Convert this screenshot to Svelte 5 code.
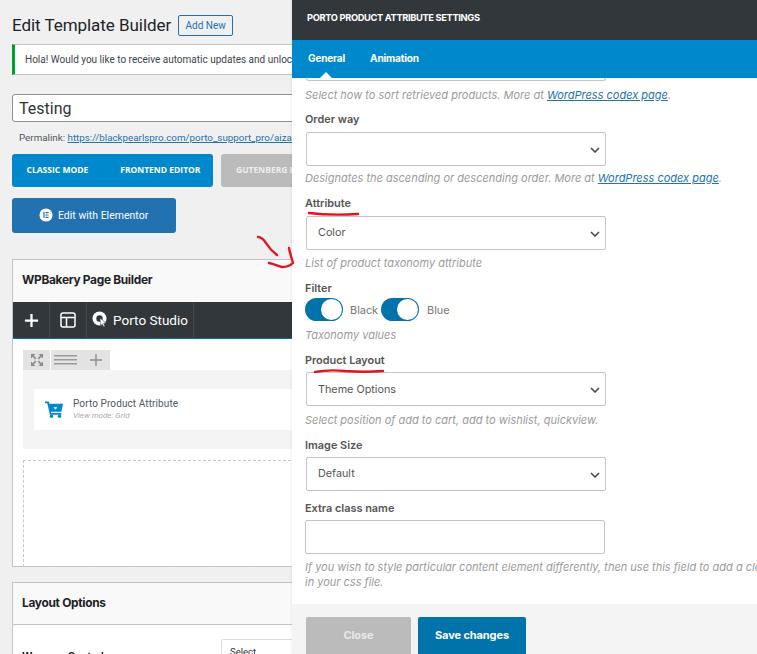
<script>
  const tabs = ['General', 'Animation'];
</script>

<div class="stage">
  <main class="page">
    <div class="title-row">
      <h1>Edit Template Builder</h1>
      <span class="add-new">Add New</span>
    </div>
    <div class="notice">Hola! Would you like to receive automatic updates and unlock</div>
    <div class="title-input">Testing</div>
    <div class="permalink">Permalink: <a href="#p">https://blackpearlspro.com/porto_support_pro/aizaz</a></div>
    <div class="modes">
      <div class="mode-blue"><span>CLASSIC MODE</span><span>FRONTEND EDITOR</span></div>
      <div class="mode-gray">GUTENBERG EDITOR</div>
    </div>
    <div class="elementor">
      <svg width="16" height="16" viewBox="0 0 16 16"><circle cx="8" cy="8" r="7.5" fill="#fff"/><path d="M5 4.600h1.400v6.800H5zM7.400 4.600H11V6H7.400zM7.400 7.300H11v1.400H7.400zM7.400 10H11v1.400H7.400z" fill="#2271b1"/></svg>
      <span>Edit with Elementor</span>
    </div>

    <section class="card builder">
      <header class="card-head">WPBakery Page Builder</header>
      <div class="toolbar">
        <div class="tool tool-plus">
          <svg width="15" height="15" viewBox="0 0 16 16"><path d="M8 1v14M1 8h14" stroke="#fff" stroke-width="2.400"/></svg>
        </div>
        <div class="tool tool-layout">
          <svg width="16" height="16" viewBox="0 0 16 16" fill="none" stroke="#fff" stroke-width="1.500"><rect x="1" y="1" width="14" height="14" rx="2"/><path d="M1 5.500h14M6.500 5.500V15"/></svg>
        </div>
        <div class="tool tool-studio">
          <svg width="16" height="18" viewBox="0 0 16 18"><circle cx="7.500" cy="7.500" r="7" fill="#fff"/><circle cx="7.500" cy="7.500" r="3.200" fill="#32373c"/><path d="M8 7l6 5-2.500.3 1.500 3-1.300.6-1.500-3L8.500 14z" fill="#fff" stroke="#32373c" stroke-width=".5"/></svg>
          <span>Porto Studio</span>
        </div>
      </div>
      <div class="canvas">
        <div class="row-controls">
          <div class="ctl ctl-move">
            <svg width="12" height="12" viewBox="0 0 12 12"><path d="M0 0h4.500L0 4.500zM12 0v4.500L7.500 0zM0 12V7.500L4.500 12zM12 12H7.500L12 7.500z" fill="#8a8a8a"/><path d="M2 2l2.800 2.800M10 2L7.200 4.800M2 10l2.800-2.800M10 10L7.200 7.200" stroke="#8a8a8a" stroke-width="1.700"/></svg>
          </div>
          <div class="ctl ctl-rest">
            <svg width="23" height="10" viewBox="0 0 23 10" fill="#9a9a9a"><rect y="0" width="23" height="1.500"/><rect y="4" width="23" height="1.500"/><rect y="8" width="23" height="1.500"/></svg>
            <svg width="12" height="12" viewBox="0 0 12 12"><path d="M6 0v12M0 6h12" stroke="#8a8a8a" stroke-width="1.300"/></svg>
          </div>
        </div>
        <div class="row-box">
          <div class="element">
            <svg width="18" height="17" viewBox="0 0 18 17"><path d="M0 .5h3.800l.7 2.200H18l-1.600 8H5.900l.4 1.300h10v1.700H4.900L2.300 2.300H0z" fill="#0088cc"/><circle cx="6.500" cy="15.300" r="1.700" fill="#0088cc"/><circle cx="14.500" cy="15.300" r="1.700" fill="#0088cc"/><path d="M10.300 4v2.200h2L10.500 8.700 8.500 6.200h1.800V4z" fill="#fff"/></svg>
            <div class="element-text">
              <div class="element-name">Porto Product Attribute</div>
              <div class="element-mode">View mode: Grid</div>
            </div>
          </div>
        </div>
        <div class="dropzone"></div>
      </div>
    </section>

    <section class="card layout-card">
      <header class="card-head layout-head">Layout Options</header>
      <div class="layout-body">
        <span class="layout-label">Woocom Control</span>
        <span class="layout-select">Select</span>
      </div>
    </section>
  </main>

  <aside class="panel">
    <div class="panel-title">PORTO PRODUCT ATTRIBUTE SETTINGS</div>
    <nav class="panel-tabs">
      {#each tabs as t, i}
        <span class="tab" class:active={i === 0}>{t}</span>
      {/each}
    </nav>
    <div class="panel-body">
      <div class="clipped-select"></div>
      <p class="help h-first">Select how to sort retrieved products. More at <a href="#w">WordPress codex page</a>.</p>

      <div class="label l-near">Order way</div>
      <div class="select"><svg class="chev" width="10" height="6" viewBox="0 0 10 6"><path d="M1 1l4 4 4-4" fill="none" stroke="#444" stroke-width="1.500"/></svg></div>
      <p class="help h-high">Designates the ascending or descending order. More at <a href="#w">WordPress codex page</a>.</p>

      <div class="label">Attribute</div>
      <div class="select"><span>Color</span><svg class="chev" width="10" height="6" viewBox="0 0 10 6"><path d="M1 1l4 4 4-4" fill="none" stroke="#444" stroke-width="1.500"/></svg></div>
      <p class="help">List of product taxonomy attribute</p>

      <div class="label">Filter</div>
      <div class="toggles">
        <span class="toggle"><i></i></span><span class="tlabel">Black</span>
        <span class="toggle"><i></i></span><span class="tlabel">Blue</span>
      </div>
      <p class="help h-low">Taxonomy values</p>

      <div class="label">Product Layout</div>
      <div class="select s-tight"><span>Theme Options</span><svg class="chev" width="10" height="6" viewBox="0 0 10 6"><path d="M1 1l4 4 4-4" fill="none" stroke="#444" stroke-width="1.500"/></svg></div>
      <p class="help h-low">Select position of add to cart, add to wishlist, quickview.</p>

      <div class="label">Image Size</div>
      <div class="select s-tight s-lift"><span>Default</span><svg class="chev" width="10" height="6" viewBox="0 0 10 6"><path d="M1 1l4 4 4-4" fill="none" stroke="#444" stroke-width="1.500"/></svg></div>

      <div class="label l-near">Extra class name</div>
      <div class="text-input"></div>
      <p class="help h-extra">If you wish to style particular content element differently, then use this field to add a class name and then refer to it<br/>in your css file.</p>
    </div>
    <footer class="panel-foot">
      <span class="btn btn-close">Close</span>
      <span class="btn btn-save">Save changes</span>
    </footer>
  </aside>

  <svg class="ink" width="757" height="654" viewBox="0 0 757 654" fill="none" stroke="#e0161c" stroke-linecap="round" stroke-width="2.400">
    <path d="M258 237c4 0 6 3 8 6 3 5 7 9 11 12"/>
    <path d="M289 248c1 6 3 11 4 15-3 3-7 4-11 4-4-1-8-3-13-4"/>
    <path d="M309 213c16 2 33 2 49 1"/>
    <path d="M315 372c10-2 20-2 30-1 13 1 26 1 38 0"/>
  </svg>
</div>

<style>
  :global(body) { margin: 0; background: #f0f0f1; }
  .stage { position: relative; width: 757px; height: 654px; overflow: hidden; font-family: Roboto, "Open Sans", sans-serif; color: #3c434a; }

  .page { width: 757px; box-sizing: border-box; padding: 15px 0 0 12px; }
  .title-row { display: flex; align-items: center; gap: 7px; height: 21px; }
  h1 { margin: 0; font-size: 17px; font-weight: 400; color: #1d2327; line-height: 21px; white-space: nowrap; letter-spacing: -.05px; }
  .add-new { box-sizing: border-box; width: 55px; height: 21px; border: 1px solid #2271b1; border-radius: 2px; color: #2271b1; font-size: 10px; line-height: 19px; text-align: center; }
  .notice { box-sizing: border-box; margin-top: 8px; height: 31px; width: 745px; background: #fff; border: 1px solid #c3c4c7; border-left: 3px solid #00a32a; padding-left: 10px; font-size: 10px; line-height: 30px; white-space: nowrap; overflow: hidden; }
  .title-input { box-sizing: border-box; margin-top: 19px; height: 28px; width: 745px; background: #fff; border: 1px solid #8c8f94; border-radius: 3px; padding: 1px 0 0 6px; font-size: 16px; line-height: 26px; color: #2c3338; }
  .permalink { margin: 9px 0 0 7px; font-size: 9.800px; line-height: 14px; color: #50575e; white-space: nowrap; }
  .permalink a { color: #2271b1; }

  .modes { display: flex; gap: 8px; margin-top: 9px; height: 33px; font-family: "Open Sans", sans-serif; font-size: 8.500px; font-weight: 700; color: #fff; line-height: 32px; }
  .mode-blue { box-sizing: border-box; width: 201px; background: #0088cc; border-radius: 3px; display: flex; gap: 32px; padding-left: 14.500px; }
  .mode-gray { width: 200px; background: #bbb; border-radius: 3px 0 0 3px; padding-left: 15px; white-space: nowrap; color: #eee; }

  .elementor { box-sizing: border-box; margin-top: 11px; width: 164px; height: 35px; background: #2271b1; border-radius: 3px; color: #fff; font-size: 10.500px; display: flex; align-items: center; gap: 5px; padding-left: 27px; padding-bottom: 1px; }
  .elementor svg { width: 14px; height: 14px; }

  .card { box-sizing: border-box; width: 745px; background: #fff; border: 1px solid #c3c4c7; }
  .builder { margin-top: 26px; height: 308px; }
  .card-head { height: 42px; box-sizing: border-box; padding-left: 9px; background: #f9f9f9; font-family: Inter, sans-serif; font-size: 11.900px; font-weight: 700; letter-spacing: -.3px; line-height: 40px; color: #1d2327; }
  .toolbar { height: 37px; background: #32373c; border-bottom: 1px solid #0073aa; box-sizing: border-box; display: flex; color: #fff; }
  .tool { display: flex; align-items: center; justify-content: center; border-right: 1px solid #454a4f; }
  .tool-plus { width: 36px; }
  .tool-layout { width: 36px; }
  .tool-studio { width: 106px; gap: 5px; font-size: 13.500px; }

  .canvas { padding: 11px 10px 0; }
  .row-controls { display: flex; height: 20px; gap: 1px; }
  .ctl { background: #e3e3e3; display: flex; align-items: center; justify-content: center; }
  .ctl-move { width: 27px; }
  .ctl-rest { width: 59px; gap: 13px; justify-content: flex-start; padding-left: 3px; box-sizing: border-box; }
  .row-box { background: #f4f4f4; height: 79px; padding: 19px 11px 0; box-sizing: border-box; }
  .element { background: #fff; height: 41px; display: flex; align-items: center; padding-left: 11px; gap: 10px; }
  .element-name { font-size: 10px; line-height: 13px; color: #50575e; letter-spacing: .1px; margin-top: -2px; }
  .element-mode { font-size: 8px; line-height: 11px; color: #aaa; font-style: italic; }
  .dropzone { box-sizing: border-box; margin-top: 11px; height: 107px; border: 1px dashed #c8c8c8; }

  .layout-card { margin-top: 15px; height: 120px; }
  .layout-head { border-bottom: 1px solid #c3c4c7; line-height: 40px; }
  .layout-body { display: flex; padding: 14px 0 0 9px; position: relative; font-size: 10px; }
  .layout-label { width: 199px; margin-top: 11px; font-weight: 700; color: #1d2327; font-family: Inter, sans-serif; }
  .layout-select { box-sizing: border-box; width: 300px; height: 30px; border: 1px solid #ddd; border-radius: 2px; padding: 6px 8px; color: #333; font-size: 9.500px; }

  .panel { position: absolute; left: 292px; top: 0; width: 465px; height: 654px; background: #fff; display: flex; flex-direction: column; box-shadow: -1px 0 2px rgba(0,0,0,.05); font-family: Inter, sans-serif; }
  .panel-title { flex: none; height: 40px; background: #32373c; color: #fff; font-size: 9.300px; font-weight: 700; line-height: 36px; padding-left: 15px; letter-spacing: -.35px; white-space: nowrap; }
  .panel-tabs { flex: none; height: 38px; background: #0088cc; display: flex; gap: 25px; padding-left: 16px; color: #fff; font-size: 10.100px; font-weight: 700; line-height: 37px; letter-spacing: -.2px; }
  .tab { position: relative; }
  .tab.active::after { content: ""; position: absolute; left: 12px; bottom: 0; border: 6px solid transparent; border-top: 0; border-bottom-color: #fff; }

  .panel-body { flex: 1; min-height: 0; overflow: hidden; padding: 0 0 0 13px; color: #666; position: relative; }
  .clipped-select { box-sizing: border-box; width: 300px; height: 3px; margin: 0 0 0 1px; border: 1px solid #c3c4c7; border-top: 0; border-radius: 0 0 3px 3px; }
  .help { margin: 6px 0 0; font-size: 11px; line-height: 14px; font-style: italic; color: #9b9b9b; white-space: nowrap; }
  .h-first { margin-top: 7px; }
  .h-low { margin-top: 7px; }
  .h-high { margin-top: 5px; }
  .help a { color: #2271b1; }
  .label { margin-top: 11px; font-size: 10.900px; font-weight: 600; color: #555; line-height: 14px; }
  .l-near { margin-top: 10px; }
  .select { box-sizing: border-box; width: 300px; height: 34px; margin: 6px 0 0 1px; border: 1px solid #c3c4c7; border-radius: 2px; display: flex; align-items: center; padding: 0 0 2px 11px; font-size: 10.800px; color: #555; position: relative; }
  .s-tight { margin-top: 5px; padding-bottom: 0; }
  .s-lift { padding-bottom: 2px; }
  .chev { position: absolute; right: 5px; top: 14px; }
  .toggles { display: flex; align-items: center; height: 23px; margin-top: 3px; font-size: 10.900px; color: #777; }
  .toggle { box-sizing: border-box; width: 38px; height: 23px; background: #0073aa; border-radius: 12px; position: relative; flex: none; }
  .toggle i { position: absolute; right: 1px; top: 1px; width: 21px; height: 21px; border-radius: 50%; background: #fff; }
  .tlabel { margin: 0 0 0 7px; width: 31px; }
  .tlabel:last-child { margin-left: 8px; }
  .text-input { box-sizing: border-box; width: 300px; height: 34px; margin-top: 5px; border: 1px solid #c3c4c7; border-radius: 2px; }
  .h-extra { margin-top: 6px; line-height: 15px; }

  .panel-foot { flex: none; height: 50px; background: #f4f4f4; display: flex; gap: 7px; padding: 13px 0 0 14px; box-sizing: border-box; }
  .btn { box-sizing: border-box; height: 40px; border-radius: 2px; color: #fff; font-size: 11px; font-weight: 700; line-height: 37px; text-align: center; letter-spacing: -.1px; }
  .btn-close { width: 105px; background: #bbb; color: #e8e8e8; }
  .btn-save { width: 108px; background: #0073aa; }

  .ink { position: absolute; left: 0; top: 0; pointer-events: none; }
</style>
